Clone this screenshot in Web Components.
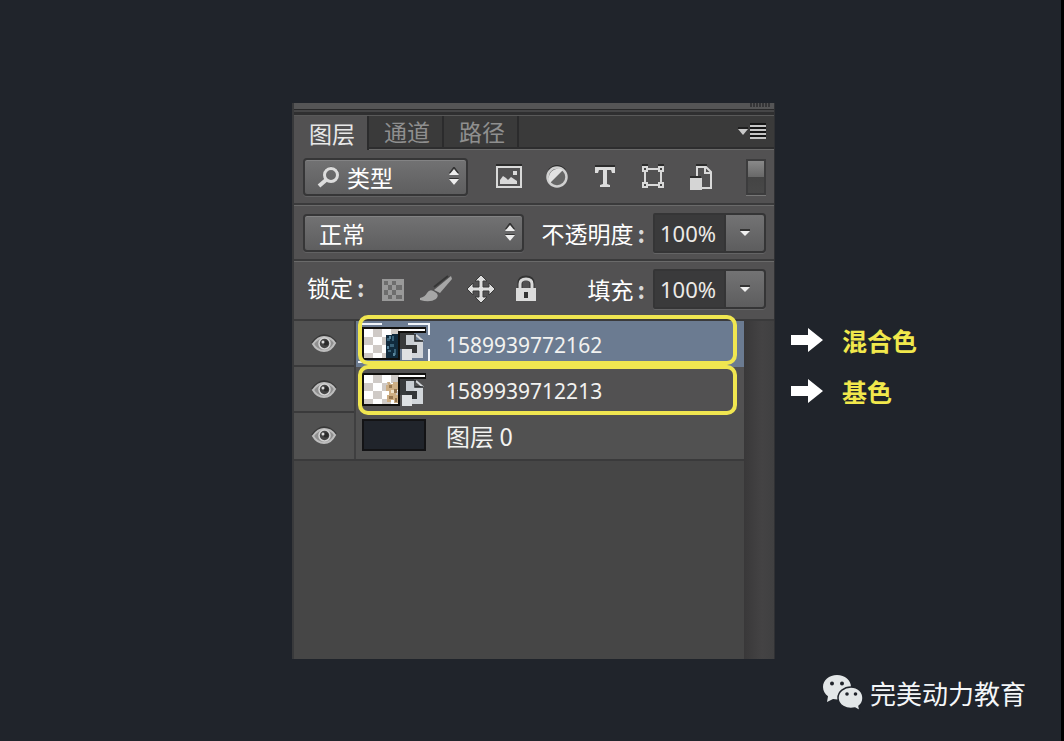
<!DOCTYPE html>
<html lang="zh-CN">
<head>
<meta charset="utf-8">
<title>图层面板</title>
<style>
html, body { margin: 0; background: #20242b; }
body { font-family: "Noto Sans", "Noto Sans CJK SC", sans-serif; color: #fff; }
</style>
</head>
<body>
<tutorial-stage>
  <layers-panel slot="panel"></layers-panel>
  <layer-note slot="notes">混合色</layer-note>
  <layer-note slot="notes">基色</layer-note>
  <brand-mark slot="brand">完美动力教育</brand-mark>
</tutorial-stage>

<script>
function define(name, html, setup) {
  customElements.define(name, class extends HTMLElement {
    constructor() {
      super();
      const root = this.attachShadow({ mode: "open" });
      root.innerHTML = html;
    }
    connectedCallback() { if (setup) setup.call(this, this.shadowRoot); }
  });
}

define("tutorial-stage", `
<style>
:host { display: grid; box-sizing: border-box; min-height: 100vh; padding-top: 103px; border-right: 3px solid #000;
  grid-template-columns: 292fr 483fr 286fr; grid-template-rows: auto 1fr; }
.panel { grid-column: 2; }
.notes { grid-column: 3; display: flex; flex-direction: column; gap: 14px; padding: 218px 0 0 16px; }
.brand { grid-column: 1 / -1; display: flex; justify-content: flex-end; padding: 12px 35px 0 0; }
</style>
<main class="panel"><slot name="panel"></slot></main>
<aside class="notes"><slot name="notes"></slot></aside>
<footer class="brand"><slot name="brand"></slot></footer>`);

define("layer-note", `
<style>
:host { display: flex; align-items: center; gap: 19px; height: 37px; color: #f1e84c; font: bold 25px/36px "Noto Sans CJK SC", sans-serif; }
svg { display: block; }
</style>
<svg width="32" height="24" viewBox="0 0 32 24"><path d="M0 7H17V0L32 12L17 24V17H0Z" fill="#fff"/></svg>
<span><slot></slot></span>`);

define("brand-mark", `
<style>
:host { display: flex; align-items: center; gap: 6px; height: 44px; font: 26px/38px "Noto Sans CJK SC", sans-serif; color: #f4f6f8; }
</style>
<svg width="42" height="38" viewBox="0 0 42 38">
<g fill="#e3e7e8"><path d="M15 1C7 1 1 6.300 1 13C1 17 3 20 6 22.200L5 28L11 25C22 27 29 21 29 13C29 6.300 23 1 15 1Z"/>
<path d="M29 13C22 13 16 17.800 16 24C16 31 24 36 33 34L38 37L37 32C40 30 41 27 41 24C41 18 36 13 29 13Z" stroke="#20242b" stroke-width="1.500"/></g>
<g fill="#20242b"><circle cx="10" cy="9.500" r="2"/><circle cx="20" cy="9.500" r="2"/><circle cx="25" cy="20" r="1.800"/><circle cx="33.500" cy="20" r="1.800"/></g></svg>
<span><slot></slot></span>`);

define("ps-select", `
<style>
:host { display: block; position: relative; height: 38px; --indent: 14px; }
select { appearance: none; box-sizing: border-box; width: 100%; height: 38px; margin: 0; padding: 0 0 0 var(--indent);
  border: 2px solid #363637; border-radius: 4px; background: linear-gradient(#727273, #5e5e5f); color: #fff;
  font: 23px/34px "Noto Sans CJK SC", sans-serif; box-shadow: 0 1px #626263, inset 0 1px #838384; }
.arrows, ::slotted(svg) { position: absolute; pointer-events: none; }
.arrows { right: 8px; top: 9px; }
::slotted(svg) { left: 14px; top: 8px; }
</style>
<select><option></option></select>
<slot></slot>
<svg class="arrows" width="12" height="20" viewBox="0 0 12 20"><path d="M1 7H11L6 0ZM1 12H11L6 19Z" fill="#333" transform="translate(0 -1)"/><path d="M1 8H11L6 2ZM1 12H11L6 18Z" fill="#eee"/></svg>`,
function (root) {
  root.querySelector("option").textContent = this.getAttribute("value");
  root.querySelector("select").setAttribute("aria-label", this.getAttribute("label"));
});

define("ps-percent", `
<style>
:host { display: flex; align-items: center; font: 23px/34px "Noto Sans CJK SC", sans-serif; }
label { white-space: nowrap; padding-right: 8px; }
label span { padding-left: 4px; font-weight: bold; color: #d8d8d8; }
input, button { box-sizing: border-box; height: 40px; margin: 0; border: 2px solid #353536; }
input { width: 73px; padding: 0 0 0 5px; border-radius: 2px 0 0 2px; background: #3a3a3b; color: #eceae6; font: 22px/36px "Noto Sans", sans-serif; box-shadow: 0 1px #646465; }
button { width: 40px; padding: 0; border-left: 0; border-radius: 0 4px 4px 0; background: linear-gradient(#737374, #5d5d5e); box-shadow: 0 1px #646465; }
svg { display: block; margin: auto; }
</style>
<label for="v"><slot></slot><span>:</span></label>
<input id="v" type="text" value="100%">
<button type="button" aria-label="展开"><svg width="12" height="8" viewBox="0 0 12 8"><path d="M1 0H11V2H1Z" fill="#333"/><path d="M1 2H11L6 7Z" fill="#f0f0f0"/></svg></button>`);

define("layer-row", `
<style>
:host { display: grid; grid-template-columns: 62px 1fr; height: 44px; border-bottom: 2px solid #3a3a3b; background: #515151; --body: #525152; }
:host([selected]) { --body: #6b7b91; }
:host([plain]) { --body: #515151; height: 46px; }
button { display: flex; align-items: center; justify-content: center; margin: 0; padding: 0; border: 0; border-right: 2px solid #3f3f40; background: none; }
.body { display: flex; align-items: center; gap: 14px; background: var(--body); }
.name { font: 21px/44px "Noto Sans", sans-serif; padding-top: 2px; color: #f2f2f0; }
:host([plain]) .name { font: 24px/44px "Noto Sans CJK SC", sans-serif; padding-top: 0; white-space: pre; }
.pic { width: 76px; height: 44px; align-self: flex-start; }
::slotted(svg) { display: block; }
</style>
<button type="button" aria-label="显示或隐藏图层"><svg width="26" height="20" viewBox="0 0 26 20">
<path d="M1 9Q13-6 25 8" fill="none" stroke="#393939" stroke-width="2"/>
<path d="M2 10Q7 3 13 3Q20 3 24 9Q20 17 13 17Q6 17 2 10Z" fill="#8f8f8f" stroke="#bdbdbd" stroke-width="2"/>
<circle cx="13.500" cy="9.500" r="5.500" fill="#444" stroke="#d3d3d3" stroke-width="1.500"/><circle cx="15" cy="9" r="2.500" fill="#2c2c2c"/><circle cx="12" cy="8" r="1.500" fill="#ddd"/></svg></button>
<div class="body"><div class="pic"><slot name="thumb"></slot></div><span class="name"><slot></slot></span></div>`);

function smartThumb(kind) {
  let checks = "";
  for (let y = 0; y < 4; y++) for (let x = 0; x < 4; x++)
    if ((x + y) % 2) checks += `<rect x="${8 + x * 9}" y="${8 + y * 8}" width="${x === 3 ? 8 : 9}" height="${y === 3 ? 5 : 8}" fill="#cfcac6"/>`;
  const art = kind === "blue"
    ? `<path d="M30 14H36V13H43V37H30Z" fill="#102b3e"/><path d="M31 17h3v3h-3zM36 15h2v5h-2zM34 23h4v3h-4zM32 29h3v2h-3zM38 28h2v6h-2z" fill="#386178"/><path d="M33 15h2v3h-2zM31 25h2v3h-2zM37 32h2v3h-2z" fill="#58849b"/>`
    : `<path d="M31 15h3v2h3v-2h5v8h-2v5h3v8h-5v-3h-3v2h-4v-7h2v-4h-3v-6h2z" fill="#cdae84"/><path d="M33 18h3v3h-3zM38 22h3v4h-3zM33 29h4v3h-4zM39 31h2v4h-2z" fill="#93744f"/><path d="M35 23h3v3h-3z" fill="#ede0c8"/>`;
  const marks = kind === "blue" ? `<path d="M6 3H26M52 3H73V14M73 28V40M2 41H6" fill="none" stroke="#f1f5fa" stroke-width="2"/>` : "";
  return `<svg slot="thumb" width="76" height="44" viewBox="0 0 76 44">${marks}
<path d="M6 6H70V12H44V39H6Z" fill="#11100e"/><path d="M8 8H69V10H43V37H8Z" fill="#fff"/>${checks}
<path d="M43 8H69V10H43Z" fill="#fff"/>${art}<path d="M42 10H70V12H44V39H42Z" fill="#11100e"/>
<rect x="44" y="12" width="14" height="16" fill="#393b3c"/>
<path d="M50 14H60V20H67V37H54V32H60V24H50Z" fill="#d2d6da"/>
<path d="M60 14L67 20" fill="none" stroke="#d2d6da" stroke-width="2"/>
<path d="M59 13V20H67" fill="none" stroke="#202326" stroke-width="1.500"/>
<path d="M50 24H61V32H56V28H50Z" fill="#343638"/>
<path d="M50 14H58V24H50Z" fill="#c9ced3"/>
<rect x="46" y="28" width="10" height="11" fill="#dfe1e3"/></svg>`;
}

define("layers-panel", `
<style>
:host { display: block; border: 0 solid #38393b; border-left-width: 2px; border-right: 1px solid #303134; background: #525152; color: #fff; }
button { margin: 0; padding: 0; border: 0; background: none; color: inherit; }
svg { display: block; }
.grip { height: 6px; background: #555556; display: flex; justify-content: flex-end; padding-right: 2px; }
.seam { height: 2px; background: #464647; border-top: 1px solid #29292a; border-bottom: 3px solid #2f2f30; }
nav { display: flex; height: 31px; background: #3a3a3a; border-top: 1px solid #595959; border-bottom: 2px solid #2d2d2e; }
nav button { box-sizing: border-box; width: 75px; padding-left: 3px; border-right: 2px solid #2b2b2c; color: #8f8f8f; font: 23px/31px "Noto Sans CJK SC", sans-serif; }
nav button.on { height: 34px; background: #525152; color: #e8e8e8; }
nav .menu { width: 30px; margin-left: auto; margin-right: 7px; padding: 0; border: 0; }
.bar { box-sizing: border-box; display: flex; align-items: center; height: 56px; padding: 0 8px 0 9px; border-top: 1px solid #6a6a6a; border-bottom: 2px solid #3a3a3b; }
.bar.tall { height: 60px; padding: 0 8px 3px 13px; }
.kind { flex: 0 1 165px; --indent: 42px; }
.mode { flex: 1 1 220px; margin-right: 18px; }
.filters { flex: 1; display: flex; justify-content: space-between; padding: 0 31px 0 27px; }
.filters button { display: flex; justify-content: center; align-items: center; width: 28px; height: 28px; }
.toggle { width: 20px; height: 36px; border: 2px solid #3c3c3d; box-shadow: 0 1px #777; background: linear-gradient(#898989, #686868 50%, #444 50%, #484848); }
.lock { font: 23px/34px "Noto Sans CJK SC", sans-serif; padding-bottom: 4px; }
.lock b { padding-left: 4px; color: #d8d8d8; }
.locks { display: flex; gap: 14px; padding-left: 17px; }
ps-percent { margin-left: auto; }
.list { display: flex; min-height: 338px; background: #464646; }
.rows { flex: 1; position: relative; }
.track { width: 30px; background: linear-gradient(90deg, #393839, #444344 60%, #404041); }
.marks { position: absolute; top: -6px; left: 64px; right: 7px; pointer-events: none; }
.marks div { box-sizing: border-box; height: 50px; border: 4px solid #f0e650; border-radius: 10px; }
</style>
<div class="grip"><svg width="22" height="4" viewBox="0 0 22 4"><path d="M0 1H20M0 3H20" stroke="#171719" stroke-width="1" stroke-dasharray="2 1"/></svg></div>
<div class="seam"></div>
<nav>
  <button type="button" class="on">图层</button><button type="button">通道</button><button type="button">路径</button>
  <button type="button" class="menu" aria-label="面板菜单"><svg width="30" height="20" viewBox="0 0 30 20"><path d="M1 6H11" stroke="#202020" stroke-width="2"/><path d="M1 7H11L6 13Z" fill="#c9c9c9"/><path d="M13 2H29M13 6H29M13 10H29M13 14H29" stroke="#151515" stroke-width="2"/><path d="M13 4H29M13 8H29M13 12H29M13 16H29" stroke="#c4c4c4" stroke-width="2"/></svg></button>
</nav>
<div class="bar">
  <ps-select class="kind" value="类型" label="筛选类型"><svg width="24" height="22" viewBox="0 0 24 22"><path d="M8 5Q14-2 21 6" fill="none" stroke="#383838" stroke-width="2"/><circle cx="14" cy="9" r="6.500" fill="none" stroke="#ddd" stroke-width="3"/><path d="M9 14L2 20" stroke="#ddd" stroke-width="4"/></svg></ps-select>
  <div class="filters">
    <button type="button" aria-label="像素图层"><svg width="28" height="26" viewBox="0 0 28 26"><path d="M1 1H27" stroke="#2b2b2b" stroke-width="2"/><rect x="2" y="3" width="24" height="20" fill="none" stroke="#d9d9d9" stroke-width="2"/><path d="M5 20V16L8 12L11 14L13 16L16 13L22 17V20Z" fill="#d9d9d9"/><rect x="18" y="7" width="4" height="4" fill="#d9d9d9"/></svg></button>
    <button type="button" aria-label="调整图层"><svg width="24" height="26" viewBox="0 0 24 26"><path d="M4 6Q12-2 20 6" fill="none" stroke="#2b2b2b" stroke-width="2"/><circle cx="12" cy="13" r="9.500" fill="#666" stroke="#d0d0d0" stroke-width="2.500"/><path d="M18 6L5 19A9.500 9.500 0 0 1 18 6Z" fill="#e2e2e2"/></svg></button>
    <button type="button" aria-label="文字图层"><svg width="22" height="26" viewBox="0 0 22 26"><path d="M1 2H21" stroke="#2b2b2b" stroke-width="2"/><path d="M1 3H21V9H18L17 6H13V20L16 21V23H6V21L9 20V6H5L4 9H1Z" fill="#dcdcdc"/></svg></button>
    <button type="button" aria-label="形状图层"><svg width="24" height="26" viewBox="0 0 24 26"><path d="M1 1H7M17 1H23" stroke="#2b2b2b" stroke-width="2"/><path d="M4 5H20V21H4Z" fill="none" stroke="#d9d9d9" stroke-width="2"/><g fill="#444" stroke="#d9d9d9" stroke-width="2"><path d="M2 3H6V7H2ZM18 3H22V7H18ZM2 19H6V23H2ZM18 19H22V23H18Z"/></g></svg></button>
    <button type="button" aria-label="智能对象"><svg width="24" height="28" viewBox="0 0 24 28"><path d="M7 2H18" stroke="#2b2b2b" stroke-width="2"/><path d="M8 15V4H17L22 9V25H12" fill="none" stroke="#d9d9d9" stroke-width="2"/><path d="M16 4V10H22" fill="none" stroke="#d9d9d9" stroke-width="2"/><path d="M1 14H12" stroke="#2b2b2b" stroke-width="2"/><rect x="1" y="15" width="12" height="12" fill="#d5d5d5"/></svg></button>
  </div>
  <button type="button" class="toggle" aria-label="打开或关闭筛选"></button>
</div>
<div class="bar">
  <ps-select class="mode" value="正常" label="混合模式"></ps-select>
  <ps-percent>不透明度</ps-percent>
</div>
<div class="bar tall">
  <span class="lock">锁定<b>:</b></span>
  <div class="locks">
    <button type="button" aria-label="锁定透明像素"><svg width="24" height="26" viewBox="0 0 24 26"><rect x="1" y="3" width="22" height="22" fill="#999"/><path d="M3 5h4v4H3zM11 5h4v4h-4zM7 9h4v5H7zM15 9h6v5h-6zM3 14h4v5H3zM11 14h4v5h-4zM7 19h4v4H7zM15 19h6v4h-6z" fill="#6d6d6d"/></svg></button>
    <button type="button" aria-label="锁定图像像素"><svg width="34" height="28" viewBox="0 0 34 28"><path d="M15 12L29 1" stroke="#363636" stroke-width="2"/><path d="M32 1L33 4L21 18L15 15Z" fill="#a6a6a6"/><path d="M1 23Q6 22 8 18Q11 13 16 17Q21 20 17 24Q11 28 1 25Z" fill="#a6a6a6"/></svg></button>
    <button type="button" aria-label="锁定位置"><svg width="28" height="28" viewBox="0 0 28 28"><path d="M14 0L20 6H16V12H22V8L28 14L22 20V16H16V22H20L14 28L8 22H12V16H6V20L0 14L6 8V12H12V6H8Z" fill="#dedede" stroke="#393939" stroke-width="1"/></svg></button>
    <button type="button" aria-label="锁定全部"><svg width="34" height="28" viewBox="0 0 34 28"><path d="M11 13V8Q11 3 17 3T23 8V13" fill="none" stroke="#333" stroke-width="5"/><path d="M11 14V9Q11 4 17 4T23 9V14" fill="none" stroke="#d9d9d9" stroke-width="3"/><rect x="7" y="13" width="20" height="13" fill="#dbdbdb"/><rect x="15" y="17" width="4" height="6" fill="#333"/></svg></button>
  </div>
  <ps-percent>填充</ps-percent>
</div>
<div class="list">
  <div class="rows">
    <layer-row selected>${smartThumb("blue")}1589939772162</layer-row>
    <layer-row>${smartThumb("tan")}1589939712213</layer-row>
    <layer-row plain><svg slot="thumb" width="76" height="44" viewBox="0 0 76 44"><rect x="7" y="7" width="62" height="30" fill="#20242b" stroke="#131315" stroke-width="2"/></svg>图层 0</layer-row>
    <div class="marks"><div></div><div></div></div>
  </div>
  <div class="track"></div>
</div>`);
</script>
</body>
</html>
